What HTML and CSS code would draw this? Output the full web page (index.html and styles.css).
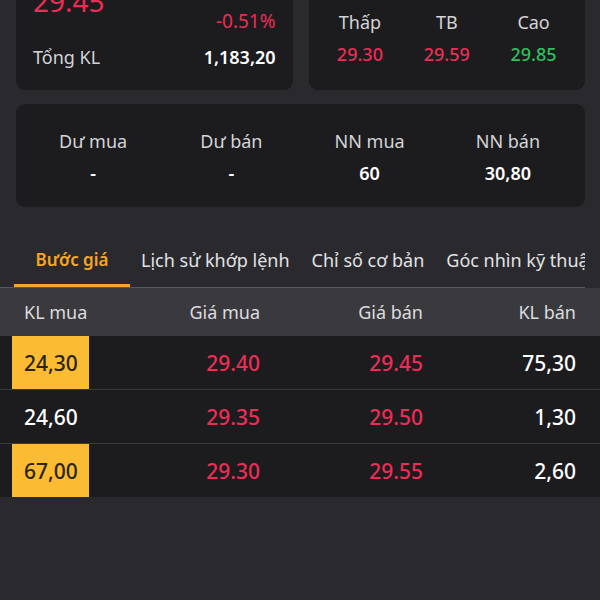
FILE: index.html
```html
<!DOCTYPE html>
<html lang="vi">
<head>
    <meta charset="UTF-8">
    <meta name="viewport" content="width=device-width, initial-scale=1.0">
    <title>Bước giá</title>
    <link rel="stylesheet" href="styles.css">
</head>
<body>

    <div class="summary">
        <div class="card price-card">
            <div class="price-row">
                <div class="last-price">29.45</div>
                <div class="change">
                    <span class="down">-0.51%</span>
                </div>
            </div>
            <div class="volume-row">
                <span class="label">Tổng KL</span>
                <span class="value">1,183,20</span>
            </div>
        </div>

        <div class="card range-card">
            <div class="range-col">
                <span class="label">Thấp</span>
                <span class="down">29.30</span>
            </div>
            <div class="range-col">
                <span class="label">TB</span>
                <span class="down">29.59</span>
            </div>
            <div class="range-col">
                <span class="label">Cao</span>
                <span class="up">29.85</span>
            </div>
        </div>
    </div>

    <div class="card flow-card">
        <div class="flow-col">
            <span class="label">Dư mua</span>
            <span class="value">-</span>
        </div>
        <div class="flow-col">
            <span class="label">Dư bán</span>
            <span class="value">-</span>
        </div>
        <div class="flow-col">
            <span class="label">NN mua</span>
            <span class="value">60</span>
        </div>
        <div class="flow-col">
            <span class="label">NN bán</span>
            <span class="value">30,80</span>
        </div>
    </div>

    <div class="tabs">
        <a class="tab active">Bước giá</a>
        <a class="tab">Lịch sử khớp lệnh</a>
        <a class="tab">Chỉ số cơ bản</a>
        <a class="tab">Góc nhìn kỹ thuật</a>
    </div>

    <div class="book">
        <div class="book-row book-head">
            <span>KL mua</span>
            <span class="num">Giá mua</span>
            <span class="num">Giá bán</span>
            <span class="num">KL bán</span>
        </div>
        <div class="book-row">
            <span class="hl">24,30</span>
            <span class="num down">29.40</span>
            <span class="num down">29.45</span>
            <span class="num">75,30</span>
        </div>
        <div class="book-row">
            <span>24,60</span>
            <span class="num down">29.35</span>
            <span class="num down">29.50</span>
            <span class="num">1,30</span>
        </div>
        <div class="book-row">
            <span class="hl">67,00</span>
            <span class="num down">29.30</span>
            <span class="num down">29.55</span>
            <span class="num">2,60</span>
        </div>
    </div>

</body>
</html>
```

FILE: styles.css
```css
body {
    margin: 0;
    background-color: #2a2a2e;
    color: #ffffff;
    font-family: "Noto Sans", "Open Sans", sans-serif;
    font-size: 18px;
    overflow: hidden;
}

.down {
    color: #ee2c55;
}

.up {
    color: #2fbf5c;
}

.label {
    color: #d4d4d6;
}

.value {
    color: #ffffff;
    font-weight: 600;
}

.card {
    background-color: #1c1c1f;
    border-radius: 9px;
}

/* top cards, page is scrolled a little */
.summary {
    display: grid;
    grid-template-columns: 1fr 1fr;
    gap: 16px;
    padding: 0 15px 0 16px;
    margin-top: -35px;
}

.price-card {
    padding: 10px 17px 21px 17px;
}

.price-row {
    display: flex;
    justify-content: space-between;
    align-items: flex-start;
}

.last-price {
    color: #ee2c55;
    font-size: 28px;
    line-height: 44px;
    margin-top: 4px;
}

.change {
    display: flex;
    flex-direction: column;
    align-items: flex-end;
    font-size: 19px;
    line-height: 24px;
    padding-top: 34px;
}

.volume-row {
    display: flex;
    justify-content: space-between;
    line-height: 24px;
    margin-top: 12px;
}

.range-card {
    display: grid;
    grid-template-columns: repeat(3, 1fr);
    align-items: end;
    padding: 0 8px 24px 8px;
}

.range-col {
    display: flex;
    flex-direction: column;
    align-items: center;
    gap: 8px;
    line-height: 24px;
}

.range-col .down,
.range-col .up {
    font-weight: 500;
}

.flow-card {
    display: grid;
    grid-template-columns: repeat(4, 1fr);
    margin: 14px 15px 0 16px;
    padding: 25px 8px 22px 8px;
}

.flow-col {
    display: flex;
    flex-direction: column;
    align-items: center;
    gap: 8px;
    line-height: 24px;
}

.tabs {
    display: flex;
    margin: 35px 15px 0 0;
    padding-left: 14px;
    border-bottom: 1px solid #58585c;
    white-space: nowrap;
    overflow: hidden;
}

.tab {
    color: #e2e2e4;
    padding: 6px 11px 12px 11px;
    line-height: 24px;
    border-bottom: 3px solid transparent;
}

.tab.active {
    color: #f6a623;
    font-size: 17px;
    font-weight: 600;
    min-width: 94px;
    text-align: center;
    border-bottom-color: #f6a623;
}

.book-row {
    display: grid;
    grid-template-columns: 77px 171px 163px 1fr;
    padding: 0 24px 0 12px;
    height: 53px;
    align-items: stretch;
    background-color: #1c1c1f;
    border-top: 1px solid #3a3a3e;
    font-size: 21px;
    font-weight: 500;
}

.book-row span {
    display: flex;
    align-items: center;
    padding-left: 12px;
}

.book-row .num {
    justify-content: flex-end;
    padding-left: 0;
}

.book-head {
    height: 47px;
    border-top: none;
    background-color: #3a3a3e;
    color: #dcdcde;
    font-size: 18px;
    font-weight: 400;
}

.book-row .hl {
    background-color: #fbbb33;
    color: #2a2416;
}
```
